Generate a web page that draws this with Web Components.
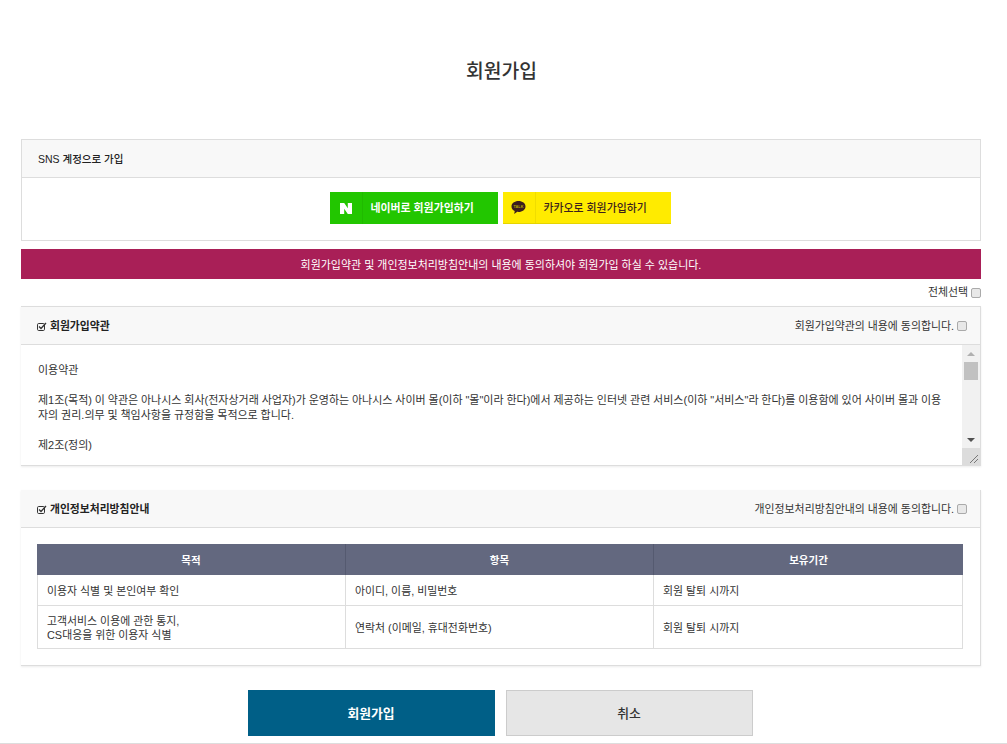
<!DOCTYPE html>
<html lang="ko">
<head>
<meta charset="utf-8">
<title>회원가입</title>
<style>
  html, body { margin: 0; padding: 0; background: #fff; }
  body { font: 11px/15px "Liberation Sans", "Noto Sans CJK KR", sans-serif; color: #222; height: 744px; overflow: hidden; }
</style>
</head>
<body>
<join-page>
  <join-panel>
    <span slot="title" style="font-weight:500;font-size:10.5px">SNS 계정으로 가입</span>
    <div style="display:flex;justify-content:center;gap:5px;padding:14px 2px 16px 0">
      <sns-button kind="naver">네이버로 회원가입하기</sns-button>
      <sns-button kind="kakao">카카오로 회원가입하기</sns-button>
    </div>
  </join-panel>

  <notice-bar>회원가입약관 및 개인정보처리방침안내의 내용에 동의하셔야 회원가입 하실 수 있습니다.</notice-bar>
  <check-line>전체선택</check-line>

  <join-panel open-bottom>
    <panel-heading slot="title">회원가입약관</panel-heading>
    <check-line slot="right" inline>회원가입약관의 내용에 동의합니다.</check-line>
    <terms-box>이용약관<br><br>제1조(목적) 이 약관은 아나시스 회사(전자상거래 사업자)가 운영하는 아나시스 사이버 몰(이하 "몰"이라 한다)에서 제공하는 인터넷 관련 서비스(이하 "서비스"라 한다)를 이용함에 있어 사이버 몰과 이용<br>자의 권리.의무 및 책임사항을 규정함을 목적으로 합니다.<br><br>제2조(정의)</terms-box>
  </join-panel>

  <join-panel open-bottom no-top style="margin-top:24px">
    <panel-heading slot="title">개인정보처리방침안내</panel-heading>
    <check-line slot="right" inline>개인정보처리방침안내의 내용에 동의합니다.</check-line>
    <privacy-table></privacy-table>
  </join-panel>

  <form-actions>
    <action-button kind="primary">회원가입</action-button>
    <action-button kind="cancel">취소</action-button>
  </form-actions>
</join-page>

<script>
class JoinPage extends HTMLElement {
  constructor() {
    super();
    this.attachShadow({ mode: 'open' });
    this.shadowRoot.innerHTML = `
      <style>
        :host { display: block; height: 744px; box-sizing: border-box; border-bottom: 1px solid #ddd; }
        h1 { margin: 0; height: 139px; box-sizing: border-box; padding: 58px 4px 0 0; text-align: center;
             font-size: 19.3px; line-height: 28px; font-weight: 500; color: #333; }
        .wrap { width: 960px; margin-left: 21px; }
      </style>
      <h1>회원가입</h1>
      <div class="wrap"><slot></slot></div>
    `;
  }
}

class JoinPanel extends HTMLElement {
  constructor() {
    super();
    this.attachShadow({ mode: 'open' });
    this.shadowRoot.innerHTML = `
      <style>
        :host { display: block; box-sizing: border-box; border: 1px solid #ddd; background: #fff; }
        :host([open-bottom]) { border-width: 1px 1px 1px 0; box-shadow: 0 1px 2px rgba(0,0,0,.08); }
        :host([no-top]) { border-top: 0; }
        header { display: flex; align-items: center; justify-content: space-between; height: 36px;
                 padding: 1px 13px 0 16px; background: #f8f8f8; border-bottom: 1px solid #ddd; }
      </style>
      <header><slot name="title"></slot><slot name="right"></slot></header>
      <slot></slot>
    `;
  }
}

class SnsButton extends HTMLElement {
  constructor() {
    super();
    this.attachShadow({ mode: 'open' });
    this.shadowRoot.innerHTML = `
      <style>
        :host { display: flex; width: 168px; height: 32px; box-sizing: border-box; align-items: center; font-size: 10.9px; font-weight: 500; }
        :host([kind=naver]) { background: #22c600; color: #fff; font-weight: 700; }
        :host([kind=kakao]) { background: #ffeb00; color: #3c1e1e; border-bottom: 1px solid #e6d400; }
        .ic { width: 32px; height: 100%; display: flex; align-items: center; justify-content: center; border-right: 1px solid rgba(0,0,0,.06); flex: none; }
        .tx { padding: 1px 0 0 8px; white-space: nowrap; }
        svg { display: block; }
      </style>
      <span class="ic">${this.getAttribute('kind') === 'naver'
        ? '<svg width="12" height="11" viewBox="0 0 12 11"><path fill="#fff" d="M0 0h4.2l3.6 5.2V0H12v11H7.8L4.2 5.800V11H0z"/></svg>'
        : '<svg width="15" height="15" viewBox="0 0 15 15"><path fill="#3c1e1e" d="M7.500 1C3.600 1 .5 3.400.5 6.400c0 1.900 1.300 3.600 3.200 4.600L3.200 14l3.100-2.200c.4 0 .8.1 1.200.1 3.900 0 7-2.400 7-5.500S11.400 1 7.500 1z"/><text x="7.500" y="8" text-anchor="middle" font-size="3.800" font-weight="700" fill="#b9a800" font-family="Liberation Sans, sans-serif">TALK</text></svg>'}</span>
      <span class="tx"><slot></slot></span>
    `;
  }
}

class NoticeBar extends HTMLElement {
  constructor() {
    super();
    this.attachShadow({ mode: 'open' });
    this.shadowRoot.innerHTML = `
      <style>
        :host { display: block; margin-top: 8px; height: 30px; line-height: 32px; text-align: center;
                background: #a91f57; color: #fff; font-size: 10.98px; white-space: nowrap; }
      </style>
      <slot></slot>
    `;
  }
}

class CheckLine extends HTMLElement {
  constructor() {
    super();
    this.attachShadow({ mode: 'open' });
    this.shadowRoot.innerHTML = `
      <style>
        :host { display: flex; justify-content: flex-end; align-items: center; gap: 3px; height: 27px; font-size: 10.9px; color: #333; white-space: nowrap; }
        :host([inline]) { display: inline-flex; height: auto; }
        input { margin: 0; width: 10px; height: 10px; appearance: none; box-sizing: border-box;
                border: 1px solid #aaa; border-radius: 2px; background: #e8e8e8; }
      </style>
      <slot></slot><input type="checkbox">
    `;
  }
}

class PanelHeading extends HTMLElement {
  constructor() {
    super();
    this.attachShadow({ mode: 'open' });
    this.shadowRoot.innerHTML = `
      <style>
        :host { display: inline-flex; align-items: center; gap: 3px; font-size: 10.8px; font-weight: 700; color: #222; white-space: nowrap; }
        svg { display: block; }
      </style>
      <svg width="10" height="9" viewBox="0 0 10 9"><rect x=".5" y="1.500" width="7" height="7" rx="1.200" fill="none" stroke="#333"/><path d="M2 4.500l2 2L9 1" fill="none" stroke="#333" stroke-width="1.300"/></svg>
      <slot></slot>
    `;
  }
}

class TermsBox extends HTMLElement {
  constructor() {
    super();
    this.attachShadow({ mode: 'open' });
    this.shadowRoot.innerHTML = `
      <style>
        :host { display: flex; height: 120px; overflow: hidden; }
        .text { flex: 1; padding: 18px 0 0 17px; font-size: 11px; word-spacing: -.2px; line-height: 15px; color: #333; white-space: nowrap; overflow: hidden; }
        .bar { width: 18px; flex: none; display: flex; flex-direction: column; background: #f1f1f1; }
        .arrow { height: 17px; display: flex; align-items: center; justify-content: center; flex: none; }
        .up { width: 0; height: 0; border: 4px solid transparent; border-top: 0; border-bottom: 4px solid #b0b0b0; }
        .down { width: 0; height: 0; border: 4px solid transparent; border-bottom: 0; border-top: 4px solid #505050; }
        .thumb { height: 18px; background: #c1c1c1; margin: 0 2px; flex: none; }
        .fill { flex: 1; }
        .grip { height: 17px; flex: none; background: #dcdcdc; display: flex; justify-content: flex-end; }
      </style>
      <div class="text"><slot></slot></div>
      <div class="bar">
        <div class="arrow"><i class="up"></i></div>
        <div class="thumb"></div>
        <div class="fill"></div>
        <div class="arrow"><i class="down"></i></div>
        <div class="grip"><svg width="17" height="17" viewBox="0 0 17 17"><path d="M7 15l8-8M11 15l4-4" stroke="#777" fill="none"/></svg></div>
      </div>
    `;
  }
}

class PrivacyTable extends HTMLElement {
  constructor() {
    super();
    this.attachShadow({ mode: 'open' });
    this.shadowRoot.innerHTML = `
      <style>
        :host { display: block; padding: 16px 17px 16px 16px; }
        table { width: 926px; border-collapse: separate; border-spacing: 0; table-layout: fixed; font-size: 10.9px; line-height: 14px; color: #333; }
        th { height: 31px; padding: 0; background: #63687f; color: #fff; font-size: 10.5px; font-weight: 700; border-right: 1px solid #555a70; box-sizing: border-box; }
        th:last-child { border-right: 0; }
        td { padding: 1px 9px 0; border-right: 1px solid #ddd; border-bottom: 1px solid #ddd; height: 31px; box-sizing: border-box; }
        td:first-child { border-left: 1px solid #ddd; }
        tr.tall td { height: 43px; }
      </style>
      <table>
        <colgroup><col style="width:309px"><col style="width:308px"><col style="width:309px"></colgroup>
        <tr><th>목적</th><th>항목</th><th>보유기간</th></tr>
        <tr><td>이용자 식별 및 본인여부 확인</td><td>아이디, 이름, 비밀번호</td><td>회원 탈퇴 시까지</td></tr>
        <tr class="tall"><td>고객서비스 이용에 관한 통지,<br>CS대응을 위한 이용자 식별</td><td>연락처 (이메일, 휴대전화번호)</td><td>회원 탈퇴 시까지</td></tr>
      </table>
    `;
  }
}

class FormActions extends HTMLElement {
  constructor() {
    super();
    this.attachShadow({ mode: 'open' });
    this.shadowRoot.innerHTML = `
      <style>
        :host { display: flex; justify-content: center; gap: 11px; margin-top: 24px; padding-right: 2px; }
      </style>
      <slot></slot>
    `;
  }
}

class ActionButton extends HTMLElement {
  constructor() {
    super();
    this.attachShadow({ mode: 'open' });
    this.shadowRoot.innerHTML = `
      <style>
        :host { display: flex; align-items: center; justify-content: center; width: 247px; height: 46px;
                box-sizing: border-box; font-size: 12.8px; cursor: pointer; }
        :host([kind=primary]) { background: #005f87; color: #fff; font-weight: 700; }
        :host([kind=cancel]) { background: #e6e6e6; color: #333; border: 1px solid #ccc; font-weight: 500; }
      </style>
      <slot></slot>
    `;
  }
}

customElements.define('join-page', JoinPage);
customElements.define('join-panel', JoinPanel);
customElements.define('sns-button', SnsButton);
customElements.define('notice-bar', NoticeBar);
customElements.define('check-line', CheckLine);
customElements.define('panel-heading', PanelHeading);
customElements.define('terms-box', TermsBox);
customElements.define('privacy-table', PrivacyTable);
customElements.define('form-actions', FormActions);
customElements.define('action-button', ActionButton);
</script>
</body>
</html>
